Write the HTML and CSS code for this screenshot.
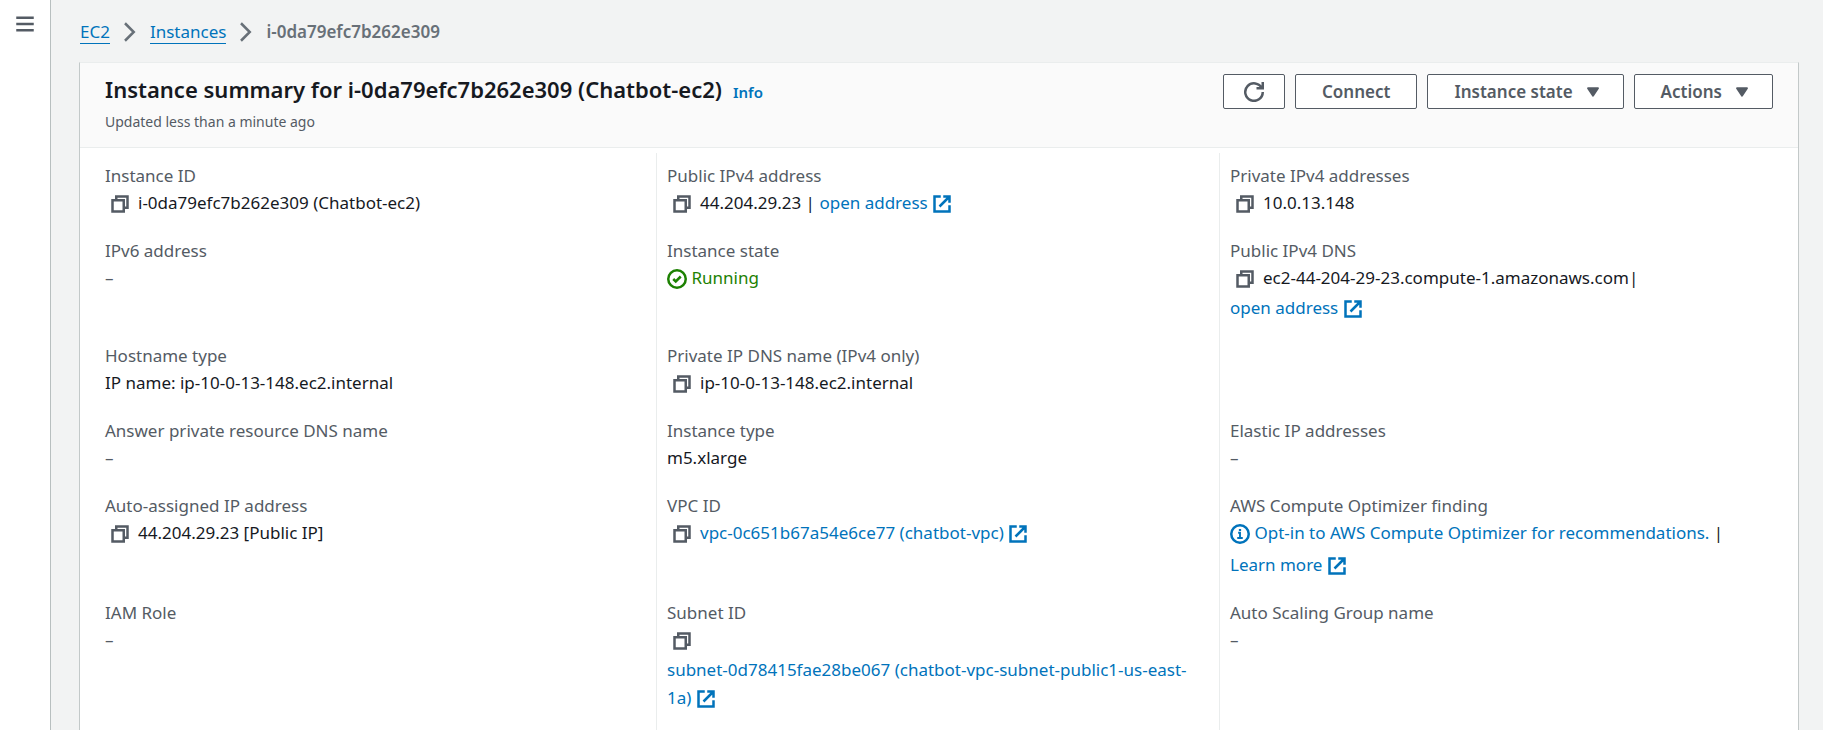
FILE: index.html
```html
<!DOCTYPE html>
<html lang="en">
<head>
<meta charset="utf-8">
<meta name="viewport" content="width=device-width, initial-scale=1">
<title>Instance summary</title>
<link rel="stylesheet" href="styles.css">
</head>
<body>
<svg class="sprite" aria-hidden="true">
  <symbol id="copy" viewBox="0 0 16 16"><path d="M2 5h9v9H2z"/><path d="M5 5V2h9v9h-3"/></symbol>
  <symbol id="external" viewBox="0 0 16 16"><path d="M14 9v5H2V2h5M9 2h5v5M6 10l8-8"/></symbol>
  <symbol id="check" viewBox="0 0 16 16"><circle cx="8" cy="8" r="7"/><path d="m5 8 2 2 4-4"/></symbol>
  <symbol id="info" viewBox="0 0 16 16"><circle cx="8" cy="8" r="7"/><path d="M8 11V7H6.5M5.8 11.2h4.4" stroke-width="1.5"/><path d="M8 4v1.6" stroke-width="1.8"/></symbol>
  <symbol id="chevron" viewBox="0 0 16 16"><path d="m4 1 7 7-7 7"/></symbol>
  <symbol id="caret" viewBox="0 0 16 16"><path d="M4 5h8l-4 6z" fill="currentColor" stroke-width="1.5" stroke-linejoin="round"/></symbol>
  <symbol id="menu" viewBox="0 0 16 16"><path d="M1 3h14M1 8h14M1 13h14"/></symbol>
  <symbol id="refresh" viewBox="0 0 16 16"><path d="M10 5h5V0M15 8a7 7 0 1 1-.7-3"/></symbol>
</svg>

<aside class="rail">
  <button class="icon-button" aria-label="Open navigation"><svg class="icon"><use href="#menu"/></svg></button>
</aside>

<main class="page">
  <nav class="crumbs" aria-label="Breadcrumb">
    <a href="#">EC2</a>
    <svg class="icon"><use href="#chevron"/></svg>
    <a href="#">Instances</a>
    <svg class="icon"><use href="#chevron"/></svg>
    <span class="current">i-0da79efc7b262e309</span>
  </nav>

  <section class="panel">
    <header class="panel-header">
      <div>
        <div class="title-row">
          <h1>Instance summary for i-0da79efc7b262e309 (Chatbot-ec2)</h1>
          <a class="info-link" href="#">Info</a>
        </div>
        <p class="updated">Updated less than a minute ago</p>
      </div>
      <div class="actions">
        <button class="button" aria-label="Refresh"><svg class="icon"><use href="#refresh"/></svg></button>
        <button class="button connect">Connect</button>
        <button class="button menu">Instance state <svg class="icon"><use href="#caret"/></svg></button>
        <button class="button menu">Actions <svg class="icon"><use href="#caret"/></svg></button>
      </div>
    </header>

    <dl class="details">
      <div class="cell">
        <dt>Instance ID</dt>
        <dd><button class="copy" aria-label="Copy"><svg class="icon"><use href="#copy"/></svg></button>i-0da79efc7b262e309 (Chatbot-ec2)</dd>
      </div>
      <div class="cell">
        <dt>Public IPv4 address</dt>
        <dd><button class="copy" aria-label="Copy"><svg class="icon"><use href="#copy"/></svg></button>44.204.29.23 | <a href="#">open address <svg class="icon"><use href="#external"/></svg></a></dd>
      </div>
      <div class="cell">
        <dt>Private IPv4 addresses</dt>
        <dd><button class="copy" aria-label="Copy"><svg class="icon"><use href="#copy"/></svg></button>10.0.13.148</dd>
      </div>

      <div class="cell">
        <dt>IPv6 address</dt>
        <dd class="empty">–</dd>
      </div>
      <div class="cell">
        <dt>Instance state</dt>
        <dd class="running"><svg class="icon"><use href="#check"/></svg> Running</dd>
      </div>
      <div class="cell">
        <dt>Public IPv4 DNS</dt>
        <dd><button class="copy" aria-label="Copy"><svg class="icon"><use href="#copy"/></svg></button>ec2-44-204-29-23.compute-1.amazonaws.com|</dd>
        <dd class="next"><a href="#">open address <svg class="icon"><use href="#external"/></svg></a></dd>
      </div>

      <div class="cell">
        <dt>Hostname type</dt>
        <dd>IP name: ip-10-0-13-148.ec2.internal</dd>
      </div>
      <div class="cell">
        <dt>Private IP DNS name (IPv4 only)</dt>
        <dd><button class="copy" aria-label="Copy"><svg class="icon"><use href="#copy"/></svg></button>ip-10-0-13-148.ec2.internal</dd>
      </div>
      <div class="cell"></div>

      <div class="cell">
        <dt>Answer private resource DNS name</dt>
        <dd class="empty">–</dd>
      </div>
      <div class="cell">
        <dt>Instance type</dt>
        <dd>m5.xlarge</dd>
      </div>
      <div class="cell">
        <dt>Elastic IP addresses</dt>
        <dd class="empty">–</dd>
      </div>

      <div class="cell">
        <dt>Auto-assigned IP address</dt>
        <dd><button class="copy" aria-label="Copy"><svg class="icon"><use href="#copy"/></svg></button>44.204.29.23 [Public IP]</dd>
      </div>
      <div class="cell">
        <dt>VPC ID</dt>
        <dd><button class="copy" aria-label="Copy"><svg class="icon"><use href="#copy"/></svg></button><a href="#">vpc-0c651b67a54e6ce77 (chatbot-vpc) <svg class="icon"><use href="#external"/></svg></a></dd>
      </div>
      <div class="cell">
        <dt>AWS Compute Optimizer finding</dt>
        <dd><a href="#"><svg class="icon"><use href="#info"/></svg> Opt-in to AWS Compute Optimizer for recommendations.</a> |</dd>
        <dd class="next spaced"><a href="#">Learn more <svg class="icon"><use href="#external"/></svg></a></dd>
      </div>

      <div class="cell">
        <dt>IAM Role</dt>
        <dd class="empty">–</dd>
      </div>
      <div class="cell">
        <dt>Subnet ID</dt>
        <dd><button class="copy" aria-label="Copy"><svg class="icon"><use href="#copy"/></svg></button></dd>
        <dd class="next"><a href="#">subnet-0d78415fae28be067 (chatbot-vpc-subnet-public1-us-east-<wbr>1a) <svg class="icon"><use href="#external"/></svg></a></dd>
      </div>
      <div class="cell">
        <dt>Auto Scaling Group name</dt>
        <dd class="empty">–</dd>
      </div>
    </dl>
  </section>
</main>
</body>
</html>
```

FILE: styles.css
```css
* { box-sizing: border-box; }

body {
  margin: 0;
  min-height: 100vh;
  display: flex;
  background: #f2f3f3;
  color: #16191f;
  font: 17px/28px "Noto Sans", "Open Sans", sans-serif;
}

a { color: #0073bb; text-decoration: none; }
h1, p, dl, dd { margin: 0; }
.sprite { display: none; }

.icon {
  width: 20px;
  height: 20px;
  flex: none;
  fill: none;
  stroke: currentColor;
  stroke-width: 2;
  vertical-align: -5px;
}

.rail {
  flex: none;
  width: 51px;
  padding: 14px 15px;
  background: #fff;
  border-right: 1px solid #b8bfbf;
}

.icon-button, .copy {
  display: inline-flex;
  padding: 0;
  border: 0;
  background: none;
  color: #545b64;
}

.page {
  flex: 1;
  min-width: 0;
  display: flex;
  flex-direction: column;
  padding: 18px 24px 0 28px;
}

.crumbs {
  display: flex;
  align-items: center;
  gap: 10px;
  margin: 0 1px 16px;
  color: #687078;
}
.crumbs a { line-height: 22px; border-bottom: 1px solid #0073bb; }
.current { font-weight: 600; }

.panel {
  flex: 1;
  display: flex;
  flex-direction: column;
  background: #fff;
  border: 1px solid #c3c9c9;
  border-top-color: #eaeded;
  border-bottom: 0;
}

.panel-header {
  display: flex;
  justify-content: space-between;
  align-items: flex-start;
  padding: 11px 25px;
  background: #fafafa;
  border-bottom: 1px solid #eaeded;
}
.title-row { display: flex; align-items: baseline; gap: 11px; }
h1 { font-size: 22px; line-height: 30px; font-weight: 600; }
.info-link { font-size: 15px; line-height: 24px; font-weight: 600; }
.updated { margin-top: 4px; color: #545b64; font-size: 14px; }

.actions { display: flex; gap: 10px; }
.button {
  display: flex;
  align-items: center;
  gap: 10px;
  height: 35px;
  padding: 0 20px;
  background: #fff;
  border: 1px solid #545b64;
  border-radius: 2px;
  color: #545b64;
  font: inherit;
  font-weight: 600;
}
.connect { padding: 0 26px; }
.menu { padding-left: 26px; }

.details {
  flex: 1;
  display: grid;
  grid-template-columns: repeat(3, 1fr);
  grid-template-rows: repeat(5, auto) 1fr;
  margin: 5px 16px 0 13px;
}
.cell { padding: 9px 10px 11px; border-left: 1px solid #eaeded; }
.cell:nth-child(3n + 1) { padding-left: 11px; border-left-color: transparent; }
dt { color: #545b64; line-height: 27px; }
.copy { margin: 0 8px 0 5px; vertical-align: -5px; }
.running { color: #1d8102; }
.empty { color: #545b64; }
.next { margin-top: 2px; }
.spaced { margin-top: 4px; }
```
